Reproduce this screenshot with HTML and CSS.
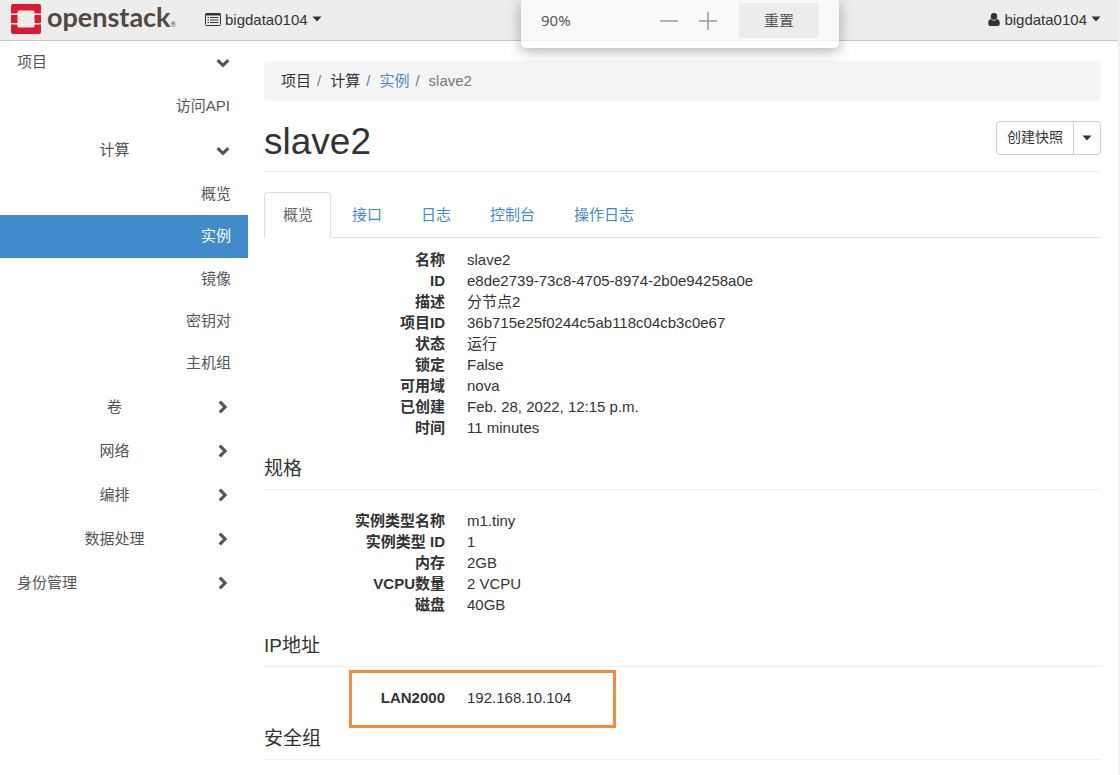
FILE: index.html
```html
<!DOCTYPE html>
<html lang="zh-CN">
<head>
<meta charset="utf-8">
<title>slave2 - OpenStack Dashboard</title>
<link rel="stylesheet" href="styles.css">
</head>
<body>
<svg class="defs" aria-hidden="true">
  <symbol id="down" viewBox="0 0 14 14"><path d="M1.6 5.2 7 10.4l5.4-5.2" fill="none" stroke="currentColor" stroke-width="3.1"/></symbol>
  <symbol id="right" viewBox="0 0 14 14"><path d="M3.7 1.6 9.1 7l-5.4 5.4" fill="none" stroke="currentColor" stroke-width="3.1"/></symbol>
  <symbol id="caret" viewBox="0 0 10 6"><path d="M0.500 0.5h9L5 5.5z" fill="currentColor"/></symbol>
</svg>

<header class="topbar">
  <a class="brand" href="#" aria-label="openstack">
    <svg class="brand-mark" viewBox="0 0 30 30"><path fill="#da1a32" d="M2 0h26a2 2 0 0 1 2 2v7.500h-6.500V8Q23.500 6.500 22 6.500H8Q6.500 6.500 6.500 8v1.500H0V2a2 2 0 0 1 2-2zM0 11h6.500v8H0zM23.500 11H30v8h-6.500zM0 20.500h6.500V22q0 1.500 1.500 1.500h14q1.500 0 1.500-1.500v-1.500H30V28a2 2 0 0 1-2 2H2a2 2 0 0 1-2-2z"/></svg>
    <span class="brand-name">openstack<span class="brand-reg">®</span></span>
  </a>
  <button class="menu" type="button">
    <svg class="icon-list" viewBox="0 0 16 13"><path fill="none" stroke="currentColor" d="M1.500.5h13a1 1 0 0 1 1 1v10a1 1 0 0 1-1 1h-13a1 1 0 0 1-1-1v-10a1 1 0 0 1 1-1z"/><path stroke="currentColor" stroke-width="2" d="M.5 1.500h15"/><path stroke="currentColor" d="M2.500 4.500h1.500M5 4.500h8.500M2.500 7h1.500M5 7h8.500M2.500 9.500h1.500M5 9.500h8.500"/></svg>
    <span>bigdata0104</span>
    <svg class="caret"><use href="#caret"/></svg>
  </button>
  <button class="menu menu-user" type="button">
    <svg class="icon-user" viewBox="0 0 12 13"><path fill="currentColor" d="M6 0a3.200 3.300 0 0 1 0 6.800A3.200 3.300 0 0 1 6 0zM3 6c.8 1.200 1.800 1.700 3 1.700S8.200 7.200 9 6c2 .2 2.800 2 2.800 4.500C11.800 12 11 13 9.700 13H2.300C1 13 .2 12 .2 10.500.2 8 1 6.200 3 6z"/></svg>
    <span>bigdata0104</span>
    <svg class="caret"><use href="#caret"/></svg>
  </button>
</header>

<div class="zoom-popup">
  <span class="zoom-value">90%</span>
  <button class="zoom-step" type="button" aria-label="缩小"><svg viewBox="0 0 18 18"><path d="M0 9h18" stroke="currentColor" stroke-width="1.500"/></svg></button>
  <button class="zoom-step" type="button" aria-label="放大"><svg viewBox="0 0 18 18"><path d="M0 9h18M9 0v18" stroke="currentColor" stroke-width="1.500"/></svg></button>
  <button class="zoom-reset" type="button">重置</button>
</div>

<div class="layout">
  <nav class="sidebar">
    <a class="item" href="#"><span>项目</span><svg class="chevron"><use href="#down"/></svg></a>
    <a class="item direct" href="#">访问API</a>
    <a class="item group" href="#"><span>计算</span><svg class="chevron"><use href="#down"/></svg></a>
    <div class="leaves">
      <a class="leaf" href="#">概览</a>
      <a class="leaf active" href="#">实例</a>
      <a class="leaf" href="#">镜像</a>
      <a class="leaf" href="#">密钥对</a>
      <a class="leaf" href="#">主机组</a>
    </div>
    <a class="item group" href="#"><span>卷</span><svg class="chevron"><use href="#right"/></svg></a>
    <a class="item group" href="#"><span>网络</span><svg class="chevron"><use href="#right"/></svg></a>
    <a class="item group" href="#"><span>编排</span><svg class="chevron"><use href="#right"/></svg></a>
    <a class="item group" href="#"><span>数据处理</span><svg class="chevron"><use href="#right"/></svg></a>
    <a class="item" href="#"><span>身份管理</span><svg class="chevron"><use href="#right"/></svg></a>
  </nav>

  <main class="content">
    <ol class="breadcrumb">
      <li>项目</li>
      <li>计算</li>
      <li><a href="#">实例</a></li>
      <li class="current">slave2</li>
    </ol>

    <div class="page-header">
      <h1>slave2</h1>
      <div class="actions">
        <button class="action" type="button">创建快照</button>
        <button class="action action-more" type="button" aria-label="更多"><svg class="caret"><use href="#caret"/></svg></button>
      </div>
    </div>

    <div class="tabs">
      <a class="tab selected" href="#">概览</a>
      <a class="tab" href="#">接口</a>
      <a class="tab" href="#">日志</a>
      <a class="tab" href="#">控制台</a>
      <a class="tab" href="#">操作日志</a>
    </div>

    <dl class="details overview">
      <dt>名称</dt><dd>slave2</dd>
      <dt>ID</dt><dd>e8de2739-73c8-4705-8974-2b0e94258a0e</dd>
      <dt>描述</dt><dd>分节点2</dd>
      <dt>项目ID</dt><dd>36b715e25f0244c5ab118c04cb3c0e67</dd>
      <dt>状态</dt><dd>运行</dd>
      <dt>锁定</dt><dd>False</dd>
      <dt>可用域</dt><dd>nova</dd>
      <dt>已创建</dt><dd>Feb. 28, 2022, 12:15 p.m.</dd>
      <dt>时间</dt><dd>11 minutes</dd>
    </dl>

    <h2>规格</h2>
    <dl class="details">
      <dt>实例类型名称</dt><dd>m1.tiny</dd>
      <dt>实例类型 ID</dt><dd>1</dd>
      <dt>内存</dt><dd>2GB</dd>
      <dt>VCPU数量</dt><dd>2 VCPU</dd>
      <dt>磁盘</dt><dd>40GB</dd>
    </dl>

    <h2>IP地址</h2>
    <dl class="details marked">
      <dt>LAN2000</dt><dd>192.168.10.104</dd>
    </dl>

    <h2>安全组</h2>
  </main>
</div>
</body>
</html>
```
FILE: styles.css
```css
*,
*::before,
*::after {
  box-sizing: border-box;
}

html {
  overflow: hidden;
}

body {
  margin: 0;
  min-height: 100vh;
  border-right: 2px solid #f1f1f1;
  background: #fff;
  color: #333;
  font: 15px/21px "Liberation Sans", "Noto Sans CJK SC", sans-serif;
}

a {
  color: #428bca;
  text-decoration: none;
}

button {
  margin: 0;
  border: 0;
  background: none;
  color: inherit;
  font: inherit;
  cursor: pointer;
}

.defs {
  display: none;
}

.caret {
  width: 10px;
  height: 6px;
}

/* Top bar */
.topbar {
  display: flex;
  align-items: center;
  height: 41px;
  padding: 0 17px 2px 11px;
  border-bottom: 1px solid #c9c9c9;
  background: #ededed;
}

.brand {
  display: flex;
  align-items: center;
  gap: 6px;
  width: 194px;
  color: #514943;
}

.brand-mark {
  width: 30px;
  height: 30px;
}

.brand-name {
  padding-top: 2px;
  font: bold 27px/34px Lato, sans-serif;
}

.brand-reg {
  font-size: 7px;
  font-weight: 400;
}

.menu {
  display: flex;
  align-items: center;
  gap: 4px;
  padding: 0;
}

.menu-user {
  margin-left: auto;
}

.icon-list {
  width: 16px;
  height: 13px;
}

.icon-user {
  width: 12px;
  height: 13px;
}

/* Browser zoom bubble over the page */
.zoom-popup {
  position: absolute;
  top: 0;
  left: 521px;
  display: flex;
  align-items: center;
  width: 318px;
  height: 48px;
  padding: 0 20px 7px;
  border-radius: 0 0 5px 5px;
  background: rgba(255, 255, 255, 0.68);
  box-shadow: 0 3px 14px rgba(0, 0, 0, 0.32);
  color: #555;
}

.zoom-value {
  flex: 1;
  font: 15px/21px "Noto Sans", sans-serif;
}

.zoom-step {
  width: 18px;
  height: 18px;
  margin-right: 21px;
  padding: 0;
  color: #999;
}

.zoom-step svg {
  display: block;
}

.zoom-reset {
  width: 80px;
  height: 35px;
  margin-left: 1px;
  border-radius: 2px;
  background: #ededed;
}

/* Layout */
.layout {
  display: flex;
}

.sidebar {
  flex: 0 0 248px;
}

.content {
  flex: 1;
  padding: 20px 17px 0 16px;
}

/* Sidebar */
.item {
  display: flex;
  gap: 4px;
  height: 44px;
  padding: 10px 18px 12px 17px;
  color: #555;
  line-height: 22px;
}

.item span {
  flex: 1;
}

.group span {
  text-align: center;
}

.direct {
  justify-content: flex-end;
}

.chevron {
  width: 14px;
  height: 14px;
  margin-top: 4px;
}

.leaves {
  padding-bottom: 2px;
}

.leaf {
  display: block;
  height: 42px;
  padding: 10px 17px;
  color: #555;
  line-height: 22px;
  text-align: right;
}

.leaf.active {
  height: 43px;
  background: #428bca;
  color: #fff;
}

/* Breadcrumb */
.breadcrumb {
  display: flex;
  margin: 0;
  padding: 9px 17px 10px;
  border-radius: 4px;
  background: #f5f5f5;
  list-style: none;
}

.breadcrumb li + li::before {
  content: "/";
  padding: 0 9px 0 6px;
  color: #777;
}

.breadcrumb .current {
  color: #777;
}

/* Title row */
.page-header {
  display: flex;
  align-items: flex-start;
  justify-content: space-between;
  height: 71px;
  padding-top: 20px;
  border-bottom: 1px solid #eee;
}

h1 {
  margin: 0;
  font-size: 37px;
  font-weight: 400;
  line-height: 42px;
}

.actions {
  display: flex;
}

.action {
  height: 34px;
  padding: 0 10px 2px;
  border: 1px solid #ccc;
  border-radius: 4px 0 0 4px;
  background: #fff;
  font-size: 14px;
  line-height: 30px;
}

.action-more {
  display: flex;
  align-items: center;
  width: 28px;
  margin-left: -1px;
  padding: 0 8px;
  border-radius: 0 4px 4px 0;
}

/* Tabs */
.tabs {
  display: flex;
  gap: 2px;
  margin-top: 20px;
  border-bottom: 1px solid #ddd;
}

.tab {
  height: 46px;
  margin-bottom: -1px;
  padding: 11px 17px 11px 18px;
  border: 1px solid transparent;
  border-radius: 4px 4px 0 0;
}

.tab.selected {
  border-color: #ddd;
  border-bottom-color: #fff;
  background: #fff;
  color: #666;
}

/* Detail lists */
.details {
  display: grid;
  grid-template-columns: 181px 1fr;
  column-gap: 22px;
  margin: 20px 0 0;
}

.details.overview {
  margin-top: 11px;
}

.details dt {
  font-weight: 700;
  text-align: right;
}

.details dd {
  margin: 0;
}

.marked {
  position: relative;
}

.marked::after {
  content: "";
  position: absolute;
  top: -17px;
  left: 85px;
  width: 267px;
  height: 58px;
  border: 3px solid #f68b3c;
}

h2 {
  margin: 0;
  padding: 20px 0 9px;
  border-bottom: 1px solid #eee;
  font-size: 19px;
  font-weight: 400;
  line-height: 22px;
}
```
